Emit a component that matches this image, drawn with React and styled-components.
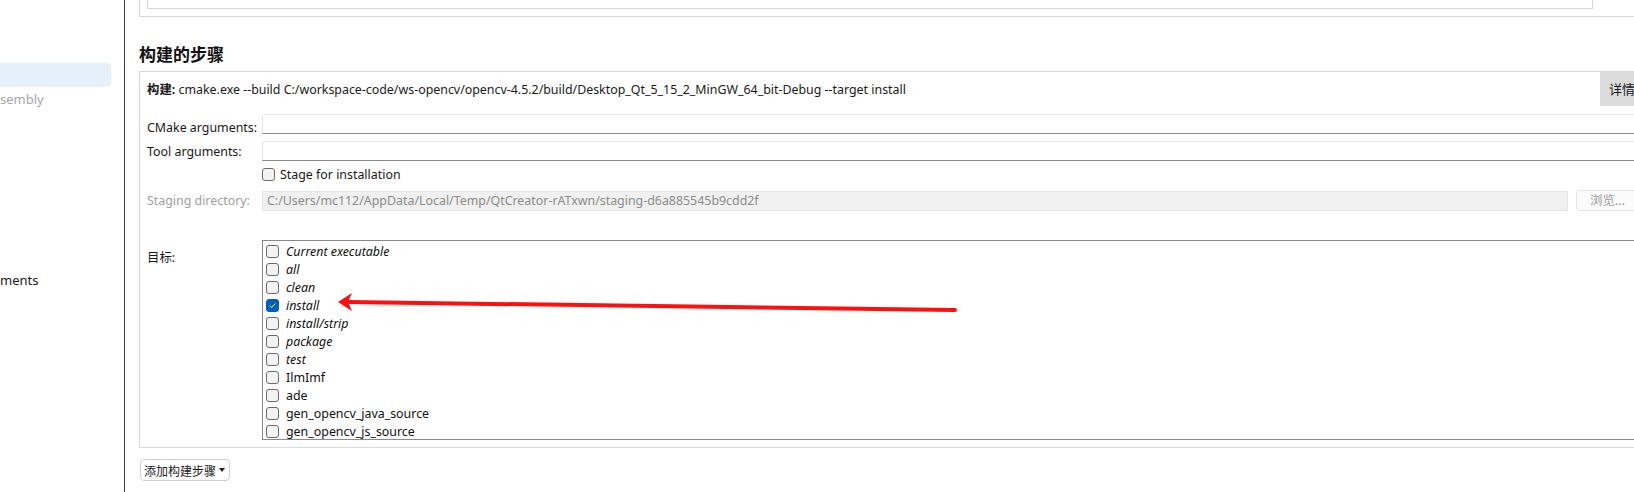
import React from 'react';
import styled, { createGlobalStyle } from 'styled-components';

const GlobalStyle = createGlobalStyle`
  html, body {
    margin: 0;
    padding: 0;
    background: #ffffff;
    overflow: hidden;
  }
  body {
    font-family: "Noto Sans", "Noto Sans CJK SC", sans-serif;
    font-size: 12.4px;
    color: #1a1a1a;
  }
`;

const Page = styled.div`
  position: relative;
  display: flex;
  width: 1634px;
  height: 492px;
  overflow: hidden;
`;

const Sidebar = styled.div`
  width: 125px;
  flex-shrink: 0;
  border-right: 1px solid #3c3c3c;
  padding-top: 63px;
  box-sizing: border-box;
`;

const NavItem = styled.div`
  height: 24px;
  width: 111px;
  line-height: 24px;
  font-size: 13px;
  border-radius: 0 4px 4px 0;
  white-space: nowrap;
  overflow: hidden;
  color: ${(p) => (p.$muted ? '#a6a6a6' : '#1a1a1a')};
  background: ${(p) => (p.$selected ? '#e5f0fb' : 'transparent')};
  margin-top: ${(p) => p.$offset || 0}px;
`;

const Main = styled.div`
  flex: 1;
  padding-left: 14px;
  overflow: hidden;
`;

const Content = styled.div`
  width: 1520px;
`;

const TopBox = styled.div`
  height: 17px;
  box-sizing: border-box;
  border: 1px solid #d9d9d9;
  border-top: none;
  padding-left: 7px;
  display: flex;
`;

const TopInner = styled.div`
  width: 1446px;
  height: 9px;
  box-sizing: border-box;
  border: 1px solid #d9d9d9;
  border-top: none;
`;

const SectionTitle = styled.h2`
  margin: 0;
  height: 54px;
  box-sizing: border-box;
  padding-top: 27px;
  line-height: 20px;
  font-size: 17px;
  font-weight: 700;
  color: #111;
  font-family: "Noto Sans CJK SC", sans-serif;
`;

const StepBox = styled.div`
  border: 1px solid #d9d9d9;
  padding: 0 0 7px 7px;
  box-sizing: border-box;
`;

const StepHeader = styled.div`
  display: flex;
  align-items: center;
  height: 34px;
`;

const StepSummary = styled.div`
  flex: 1;
  white-space: nowrap;
  b {
    font-weight: 700;
  }
`;

const DetailsButton = styled.div`
  width: 58px;
  height: 34px;
  margin-left: 1453px;
  position: absolute;
  background: #dcdcdc;
  line-height: 34px;
  padding-left: 9px;
  font-size: 13px;
  box-sizing: border-box;
`;

const FormGrid = styled.div`
  display: grid;
  grid-template-columns: 115px 1fr;
  align-items: center;
  margin-top: 8px;
`;

const Label = styled.div`
  color: ${(p) => (p.$disabled ? '#a0a0a0' : '#1a1a1a')};
  align-self: ${(p) => (p.$top ? 'start' : 'center')};
  margin-top: ${(p) => (p.$top ? '37px' : '0')};
`;

const TextInput = styled.div`
  height: 20px;
  box-sizing: border-box;
  border: 1px solid #e5e5e5;
  border-bottom: 1px solid #8a8a8a;
  border-radius: 3px 3px 0 0;
  margin-bottom: ${(p) => p.$mb || 0}px;
`;

const CheckRow = styled.label`
  display: flex;
  align-items: center;
  gap: 5px;
  height: 24px;
  margin: 1px 0 4px;
`;

const Box = styled.span`
  width: 13px;
  height: 13px;
  box-sizing: border-box;
  border-radius: 3px;
  border: 1px solid ${(p) => (p.$checked ? '#005fb8' : '#6b6b6b')};
  background: ${(p) => (p.$checked ? '#005fb8' : '#f3f3f3')};
  display: inline-flex;
  align-items: center;
  justify-content: center;
  flex-shrink: 0;
`;

const StagingRow = styled.div`
  display: flex;
  align-items: center;
  gap: 8px;
`;

const DisabledInput = styled.div`
  width: 1306px;
  height: 20px;
  box-sizing: border-box;
  background: #f0f0f0;
  border: 1px solid #e6e6e6;
  color: #8c8c8c;
  line-height: 18px;
  padding-left: 4px;
`;

const BrowseButton = styled.div`
  height: 21px;
  width: 70px;
  box-sizing: border-box;
  border: 1px solid #e3e3e3;
  border-radius: 4px;
  background: #fbfbfb;
  color: #9a9a9a;
  line-height: 19px;
  padding-left: 13px;
`;

const TargetList = styled.div`
  margin-top: 29px;
  border: 1px solid #8a8a8a;
  height: 200px;
  box-sizing: border-box;
  padding-top: 1px;
`;

const TargetItem = styled.div`
  display: flex;
  align-items: center;
  gap: 7px;
  height: 18px;
  padding-left: 3px;
  font-style: ${(p) => (p.$italic ? 'italic' : 'normal')};
  color: #111;
`;

const AddButton = styled.div`
  display: inline-flex;
  align-items: center;
  gap: 2px;
  margin-top: 11px;
  margin-left: 1px;
  height: 22px;
  box-sizing: border-box;
  padding: 0 4px 0 3px;
  border: 1px solid #d0d0d0;
  border-radius: 4px;
  font-size: 12px;
  font-family: "Noto Sans CJK SC", sans-serif;
`;

const Caret = styled.span`
  width: 0;
  height: 0;
  border-left: 3px solid transparent;
  border-right: 3px solid transparent;
  border-top: 4px solid #222;
  margin-left: 1px;
`;

const Annotation = styled.svg`
  position: absolute;
  left: 0;
  top: 0;
  pointer-events: none;
`;

const Check = ({ checked }) => (
  <Box $checked={checked}>
    {checked && (
      <svg width="9" height="9" viewBox="0 0 9 9">
        <path d="M1.8 4.8 L3.6 6.4 L7.2 2.6" fill="none" stroke="#fff" strokeWidth="1" />
      </svg>
    )}
  </Box>
);

const targets = [
  { name: 'Current executable', italic: true },
  { name: 'all', italic: true },
  { name: 'clean', italic: true },
  { name: 'install', italic: true, checked: true },
  { name: 'install/strip', italic: true },
  { name: 'package', italic: true },
  { name: 'test', italic: true },
  { name: 'IlmImf' },
  { name: 'ade' },
  { name: 'gen_opencv_java_source' },
  { name: 'gen_opencv_js_source' },
];

const App = () => {
  return (
    <>
      <GlobalStyle />
      <Page>
        <Sidebar>
          <NavItem $selected />
          <NavItem $muted>sembly</NavItem>
          <NavItem $offset={157}>ments</NavItem>
        </Sidebar>
        <Main>
          <Content>
            <TopBox>
              <TopInner />
            </TopBox>
            <SectionTitle>构建的步骤</SectionTitle>
            <StepBox>
              <StepHeader>
                <StepSummary>
                  <b>构建:</b> cmake.exe --build C:/workspace-code/ws-opencv/opencv-4.5.2/build/Desktop_Qt_5_15_2_MinGW_64_bit-Debug --target install
                </StepSummary>
                <DetailsButton>详情</DetailsButton>
              </StepHeader>
              <FormGrid>
                <Label>CMake arguments:</Label>
                <TextInput $mb={7} />
                <Label>Tool arguments:</Label>
                <TextInput />
                <div />
                <CheckRow>
                  <Check />
                  Stage for installation
                </CheckRow>
                <Label $disabled>Staging directory:</Label>
                <StagingRow>
                  <DisabledInput>C:/Users/mc112/AppData/Local/Temp/QtCreator-rATxwn/staging-d6a885545b9cdd2f</DisabledInput>
                  <BrowseButton>浏览...</BrowseButton>
                </StagingRow>
                <Label $top>目标:</Label>
                <TargetList>
                  {targets.map((t) => (
                    <TargetItem key={t.name} $italic={t.italic}>
                      <Check checked={t.checked} />
                      {t.name}
                    </TargetItem>
                  ))}
                </TargetList>
              </FormGrid>
            </StepBox>
            <AddButton>
              添加构建步骤
              <Caret />
            </AddButton>
          </Content>
        </Main>
        <Annotation width="1634" height="492" viewBox="0 0 1634 492">
          <path d="M955 310 L348 302" stroke="#ff1010" strokeWidth="4" strokeLinecap="round" />
          <path d="M338 302 L352 293 L348 302 L352 311 Z" fill="#ff1010" />
        </Annotation>
      </Page>
    </>
  );
};

export default App;
